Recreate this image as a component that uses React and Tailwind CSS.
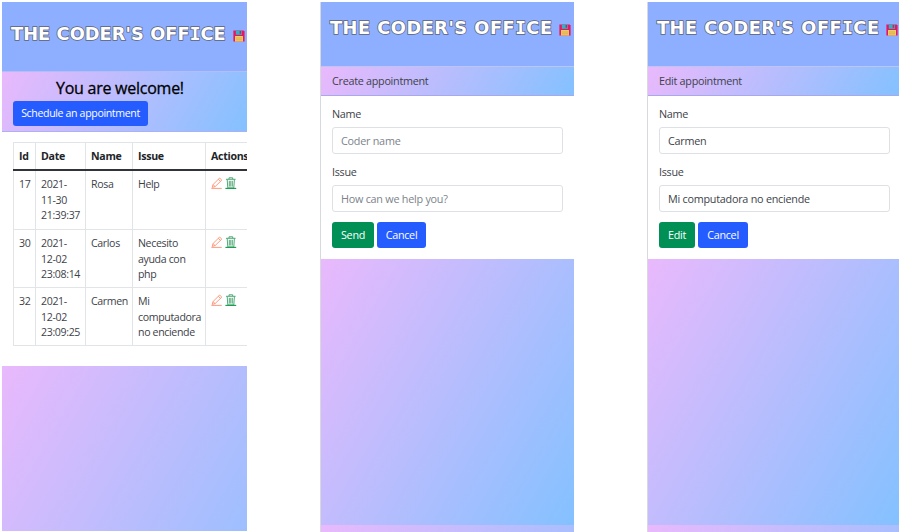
import React from 'react';

const pageGradient = 'bg-[linear-gradient(120deg,#e9b9fc_0%,#84c1ff_100%)]';

function Floppy() {
  return (
    <svg viewBox="0 0 12 12" className="h-[12px] w-[12px] shrink-0">
      <path d="M0.4 0.6h10.2l1 1v10H0.4z" fill="#ea1560" />
      <rect x="2.8" y="0.6" width="6.2" height="4.2" fill="#25b7c4" />
      <rect x="6.6" y="1" width="1.6" height="2.8" fill="#c9245f" />
      <rect x="2" y="6" width="8" height="5.6" fill="#f3cb5e" />
      <path d="M3 8h6M3 9.8h6" stroke="#c9a04a" strokeWidth="0.6" />
    </svg>
  );
}

function Pencil() {
  return (
    <svg viewBox="0 0 12 12" className="h-[12px] w-[12px] shrink-0" fill="none" stroke="#ff8f70" strokeWidth="0.9">
      <path d="M1.2 10.4 2 7.6 8.6 1l2.2 2.1L4.1 9.6zM7.3 2.3l2.2 2.1M2 7.6l2.1 2M0.4 11.4h10.4" />
    </svg>
  );
}

function Trash() {
  return (
    <svg viewBox="0 0 12 12" className="h-[12px] w-[12px] shrink-0" fill="none" stroke="#3f9f6a" strokeWidth="0.9">
      <path d="M1 2.3h9.6M4 2.2V.8h3.7v1.4M2.2 2.5l.6 8.4h6l.6-8.4M4.3 3.8v5.8M5.8 3.8v5.8M7.3 3.8v5.8" />
      <path d="M.4 11.4h10.8" stroke="#129a48" strokeWidth="1.1" />
    </svg>
  );
}

function Header({ className, titleClass }) {
  return (
    <header className={`flex items-start bg-[#8eafff] ${className}`}>
      <h1 className="flex items-start font-['DejaVu_Sans',Verdana,sans-serif] text-[17.8px] leading-[22px] font-bold whitespace-nowrap text-white">
        <span className={`[-webkit-text-stroke:1.5px_#5d6272] [paint-order:stroke_fill] ${titleClass}`}>
          THE CODER'S OFF<span className="font-['DejaVu_Sans_Mono',monospace]">I</span>CE
        </span>
        <span className="mt-[7px]"><Floppy /></span>
      </h1>
    </header>
  );
}

const rows = [
  { id: 17, date: ['2021-', '11-30', '21:39:37'], name: 'Rosa', issue: ['Help'] },
  { id: 30, date: ['2021-', '12-02', '23:08:14'], name: 'Carlos', issue: ['Necesito', 'ayuda con', 'php'] },
  { id: 32, date: ['2021-', '12-02', '23:09:25'], name: 'Carmen', issue: ['Mi', 'computadora', 'no enciende'] },
];

const grid = 'grid grid-cols-[22px_50px_47px_73px_42px]';

function Cell({ children, className = '' }) {
  return <div className={`border-l border-[#e2e5e8] pl-[5px] ${className}`}>{children}</div>;
}

function ListPanel() {
  return (
    <section className="mt-[2px] ml-[2px] flex h-[529px] w-[245px] shrink-0 flex-col overflow-hidden">
      <Header className="h-[69px] shrink-0 pt-[21px] pl-[9px]" titleClass="w-[222px] tracking-[0.05px]" />
      <div className={`h-[61px] shrink-0 border-t border-b border-t-[#b4bdf4] border-b-[#aeb0f4] pl-[11px] ${pageGradient}`}>
        <h2 className="mt-[4px] ml-[43px] text-[16px] leading-[24px] tracking-[-0.25px] whitespace-nowrap text-black [-webkit-text-stroke:0.3px_black]">You are welcome!</h2>
        <button className="mt-[1px] block h-[25px] w-[135px] rounded-[3px] bg-[#255cff] text-[10.6px] tracking-[-0.36px] whitespace-nowrap text-white">Schedule an appointment</button>
      </div>
      <div className="h-[234px] shrink-0 bg-white pt-[10px] pl-[11px]">
        <div className="border-t border-b border-[#e2e5e8] text-[10.6px] leading-[15.5px] tracking-[-0.36px] whitespace-nowrap text-[#3d4248]">
          <div className={`${grid} h-[28px] border-b-2 border-[#30343a] font-bold text-[#212529]`}>
            {['Id', 'Date', 'Name', 'Issue', 'Actions'].map((h) => (
              <Cell key={h} className="pt-[6px] tracking-[-0.3px]">{h}</Cell>
            ))}
          </div>
          {rows.map((r, i) => (
            <div key={r.id} className={`${grid} h-[58px] ${i ? 'border-t border-[#e2e5e8]' : ''}`}>
              <Cell className="pt-[6px]">{r.id}</Cell>
              <Cell className="pt-[6px]">{r.date.map((d) => <div key={d}>{d}</div>)}</Cell>
              <Cell className="pt-[6px]">{r.name}</Cell>
              <Cell className="pt-[6px]">{r.issue.map((d) => <div key={d}>{d}</div>)}</Cell>
              <Cell className="flex gap-[1.5px] pt-[6px]"><Pencil /><Trash /></Cell>
            </div>
          ))}
        </div>
      </div>
      <div className={`h-[165px] shrink-0 bg-[length:100%_364px] ${pageGradient}`} />
    </section>
  );
}

function Field({ label, value, placeholder }) {
  return (
    <label className="mb-[10px] block">
      <span className="block h-[21px] leading-[16px]">{label}</span>
      <input
        readOnly
        value={value}
        placeholder={placeholder}
        className="block h-[27px] w-[231px] rounded-[3px] border border-[#dde1e5] bg-white px-[8px] text-[10.8px] tracking-[-0.24px] text-[#3d4248] placeholder:text-[#7b838b]"
      />
    </label>
  );
}

function FormPanel({ title, action, actionClass, cancelClass, name = '', issue = '', className }) {
  return (
    <section className={`mt-[2px] flex h-[530px] shrink-0 flex-col overflow-hidden border-l border-[#d8d9df] text-[10.8px] tracking-[-0.28px] whitespace-nowrap text-[#3d4248] ${className}`}>
      <Header className="h-[64px] shrink-0 pt-[15px] pl-[9px]" titleClass="w-[229px] tracking-[0.48px]" />
      <div className={`h-[30px] shrink-0 border-t border-b border-t-[#bec5ee] border-b-[#a8a8ea] pl-[11px] leading-[27px] ${pageGradient}`}>{title}</div>
      <div className="h-[163px] shrink-0 bg-white pt-[10px] pl-[11px]">
        <Field label="Name" value={name} placeholder="Coder name" />
        <Field label="Issue" value={issue} placeholder="How can we help you?" />
        <div className="flex gap-[3px] text-white">
          <button className={`h-[26px] rounded-[3px] bg-[#008f55] ${actionClass}`}>{action}</button>
          <button className={`h-[26px] rounded-[3px] bg-[#255cff] ${cancelClass}`}>Cancel</button>
        </div>
      </div>
      <div className={`h-[273px] shrink-0 bg-[length:100%_266px] ${pageGradient}`} />
    </section>
  );
}

export default function App() {
  return (
    <main className="flex h-[532px] w-[903px] overflow-hidden bg-white font-['Open_Sans','Noto_Sans',sans-serif]">
      <ListPanel />
      <FormPanel className="ml-[73px] w-[254px]" title="Create appointment" action="Send" actionClass="w-[42px]" cancelClass="w-[49px]" />
      <FormPanel className="ml-[73px] w-[252px]" title="Edit appointment" action="Edit" actionClass="w-[36px]" cancelClass="w-[50px]" name="Carmen" issue="Mi computadora no enciende" />
    </main>
  );
}
